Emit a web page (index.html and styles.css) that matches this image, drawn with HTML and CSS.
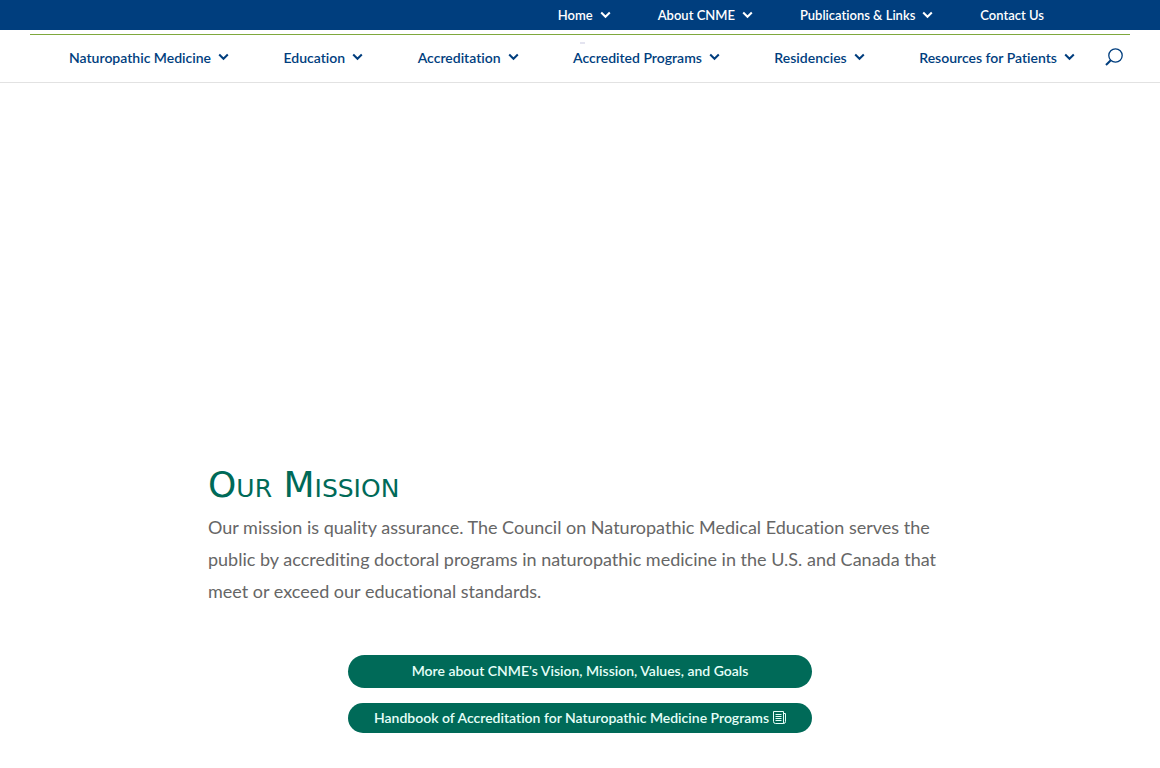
FILE: index.html
```html
<!DOCTYPE html>
<html lang="en">
<head>
<meta charset="utf-8">
<meta name="viewport" content="width=device-width, initial-scale=1">
<title>Council on Naturopathic Medical Education</title>
<link rel="stylesheet" href="styles.css">
</head>
<body>
<svg class="sprite" aria-hidden="true">
  <symbol id="chevron" viewBox="0 0 11 8"><path d="M1.2 1.5 5.5 5.8 9.8 1.5" fill="none" stroke="currentColor" stroke-width="2"/></symbol>
</svg>

<nav class="top-bar" aria-label="Secondary">
  <a class="nav-link" href="#">Home<svg class="chevron"><use href="#chevron"/></svg></a>
  <a class="nav-link" href="#">About CNME<svg class="chevron"><use href="#chevron"/></svg></a>
  <a class="nav-link" href="#">Publications &amp; Links<svg class="chevron"><use href="#chevron"/></svg></a>
  <a class="nav-link" href="#">Contact Us</a>
</nav>

<header class="header">
  <div class="header-inner">
    <span class="logo"></span>
    <nav class="main-nav" aria-label="Primary">
      <a class="nav-link" href="#">Naturopathic Medicine<svg class="chevron"><use href="#chevron"/></svg></a>
      <a class="nav-link" href="#">Education<svg class="chevron"><use href="#chevron"/></svg></a>
      <a class="nav-link" href="#">Accreditation<svg class="chevron"><use href="#chevron"/></svg></a>
      <a class="nav-link" href="#">Accredited Programs<svg class="chevron"><use href="#chevron"/></svg></a>
      <a class="nav-link" href="#">Residencies<svg class="chevron"><use href="#chevron"/></svg></a>
      <a class="nav-link" href="#">Resources for Patients<svg class="chevron"><use href="#chevron"/></svg></a>
    </nav>
    <button class="search" type="button" aria-label="Search">
      <svg width="18" height="18" viewBox="0 0 18 18" fill="none" stroke="currentColor"><circle cx="10.5" cy="7.5" r="6.7" stroke-width="1.3"/><path d="M5.8 12.2 1 17" stroke-width="2"/></svg>
    </button>
  </div>
</header>

<main class="content">
  <h1 class="title">Our Mission</h1>
  <p class="mission">Our mission is quality assurance. The Council on Naturopathic Medical Education serves the public by accrediting doctoral programs in naturopathic medicine in the U.S. and Canada that meet or exceed our educational standards.</p>
  <div class="actions">
    <a class="pill pill-large" href="#">More about CNME's Vision, Mission, Values, and Goals</a>
    <a class="pill" href="#">Handbook of Accreditation for Naturopathic Medicine Programs
      <svg width="13" height="13" viewBox="0 0 13 13" fill="none" stroke="currentColor"><path d="M.5.5h10v12H2.5a2 2 0 0 1-2-2zM10.5 2.5h2v8a2 2 0 0 1-2 2M2.5 3.5h6M2.5 5.5h6M2.5 7.5h6M2.5 9.5h6"/></svg>
    </a>
  </div>
</main>
</body>
</html>
```
FILE: styles.css
```css
* {
  box-sizing: border-box;
}

body {
  margin: 0;
  background: #fff;
  color: #666;
  font-family: Lato, "Open Sans", sans-serif;
  font-variant-ligatures: none;
}

a {
  color: inherit;
  text-decoration: none;
}

.sprite {
  display: none;
}

.nav-link {
  display: flex;
  align-items: center;
  gap: 7px;
  font-weight: 600;
  white-space: nowrap;
}

.chevron {
  width: 11px;
  height: 8px;
}

.top-bar {
  display: flex;
  justify-content: flex-end;
  gap: 47px;
  height: 30px;
  padding-right: 10%;
  background: #003e7e;
  color: #fff;
  font-size: 13px;
}

.header {
  padding: 4px 30px 0;
  border-bottom: 1px solid #e2e2e2;
  color: #003e7e;
}

.header-inner {
  position: relative;
  display: flex;
  align-items: center;
  gap: 30px;
  height: 48px;
  padding: 0 7px 3px 39px;
  border-top: 1px solid #7ea83c;
}

.logo {
  position: absolute;
  top: 7px;
  left: 50%;
  width: 5px;
  height: 2px;
  background: #e4e4f0;
}

.main-nav {
  display: flex;
  flex: 1;
  justify-content: space-between;
  font-size: 14px;
}

.search {
  display: flex;
  padding: 0;
  border: 0;
  background: none;
  color: inherit;
}

.content {
  width: 80%;
  max-width: 744px;
  margin: 0 auto;
  padding-top: 380px;
}

.title {
  margin: 0;
  color: #006a58;
  font-family: "DejaVu Sans", sans-serif;
  font-size: 36px;
  font-weight: 400;
  font-variant: small-caps;
  line-height: 44px;
}

.mission {
  margin: 4px 0 48px;
  font-size: 18px;
  font-weight: 400;
  line-height: 32px;
}

.actions {
  display: flex;
  flex-direction: column;
  gap: 15px;
  max-width: 464px;
  margin: 0 auto;
}

.pill {
  display: flex;
  align-items: center;
  justify-content: center;
  gap: 4px;
  min-height: 30px;
  padding-bottom: 2px;
  border-radius: 17px;
  background: #006a58;
  color: #e6fff8;
  font-size: 14px;
  font-weight: 600;
}

.pill-large {
  min-height: 33px;
}
```
